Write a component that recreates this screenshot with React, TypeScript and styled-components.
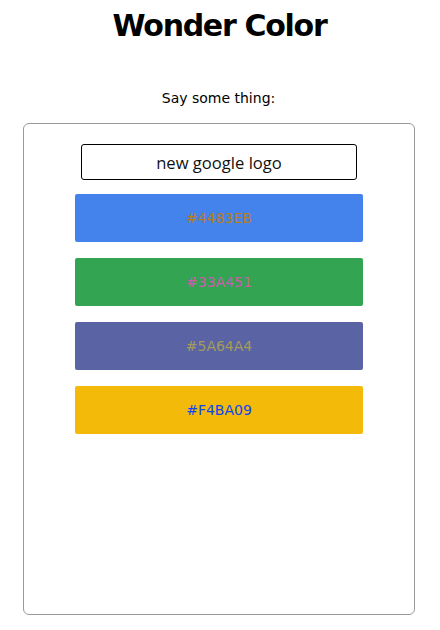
import React, { useState } from "react";
import styled, { createGlobalStyle } from "styled-components";

const Global = createGlobalStyle`
  html, body { margin: 0; padding: 0; background: #fff; }
  body { font-family: "DejaVu Sans", Verdana, sans-serif; color: #000; }
`;

const Page = styled.div`
  width: 440px;
  height: 630px;
  display: flex;
  flex-direction: column;
  align-items: flex-start;
  box-sizing: border-box;
`;

const Title = styled.h1`
  align-self: stretch;
  margin: 6px 0 0 0;
  padding-right: 1px;
  text-align: center;
  font-family: "DejaVu Sans", Verdana, sans-serif;
  font-weight: bold;
  font-size: 30px;
  line-height: 40px;
  letter-spacing: -1.3px;
`;

const Prompt = styled.p`
  align-self: stretch;
  margin: 42px 0 0 0;
  padding-right: 3px;
  text-align: center;
  font-size: 14px;
  line-height: 20px;
`;

const Card = styled.div`
  margin: 15px 0 0 23px;
  width: 392px;
  height: 492px;
  box-sizing: border-box;
  border: 1px solid #999;
  border-radius: 6px;
  padding-top: 20px;
  display: flex;
  flex-direction: column;
  align-items: center;
  gap: 14px;
`;

const Input = styled.input`
  width: 276px;
  height: 36px;
  box-sizing: border-box;
  border: 1px solid #000;
  border-radius: 3px;
  padding: 0;
  text-align: center;
  font-family: "Open Sans", "Noto Sans", sans-serif;
  font-size: 16.6px;
  color: #111;
  outline: none;
  background: #fff;
`;

const Swatches = styled.div`
  display: flex;
  flex-direction: column;
  gap: 16px;
`;

const Swatch = styled.div<{ $bg: string; $fg: string }>`
  width: 288px;
  height: 48px;
  border-radius: 2px;
  background: ${(p) => p.$bg};
  color: ${(p) => p.$fg};
  display: flex;
  align-items: center;
  justify-content: center;
  font-family: "DejaVu Sans", Verdana, sans-serif;
  font-size: 14px;
`;

const colors = ["4483EB", "33A451", "5A64A4", "F4BA09"];

const invert = (hex: string) =>
  "#" +
  (0xffffff ^ parseInt(hex, 16)).toString(16).padStart(6, "0").toUpperCase();

export default function App() {
  const [text, setText] = useState("new google logo");
  return (
    <Page>
      <Global />
      <Title>Wonder Color</Title>
      <Prompt>Say some thing:</Prompt>
      <Card>
        <Input value={text} onChange={(e) => setText(e.target.value)} />
        <Swatches>
          {colors.map((c) => (
            <Swatch key={c} $bg={"#" + c} $fg={invert(c)}>
              #{c}
            </Swatch>
          ))}
        </Swatches>
      </Card>
    </Page>
  );
}
